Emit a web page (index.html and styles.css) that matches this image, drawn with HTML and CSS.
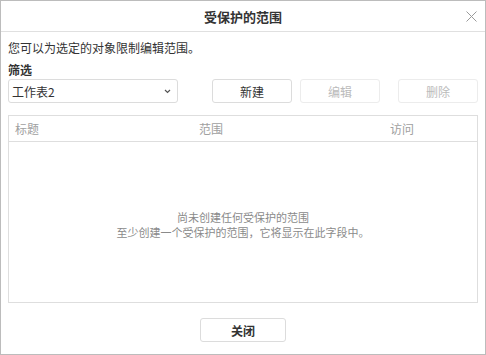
FILE: index.html
```html
<!DOCTYPE html>
<html lang="zh-CN">
<head>
  <meta charset="UTF-8">
  <title>受保护的范围</title>
  <link rel="stylesheet" href="styles.css">
</head>
<body>
  <div id="dialog">
    <!-- Header -->
    <div class="dlg-header">
      <span class="dlg-title">受保护的范围</span>
      <svg class="dlg-close" width="11" height="11" viewBox="0 0 11 11">
        <path d="M0.5 0.5 L10.5 10.5 M10.5 0.5 L0.5 10.5" stroke="#9a9a9a" stroke-width="1" fill="none"/>
      </svg>
    </div>

    <!-- Body -->
    <div class="dlg-body">
      <p class="desc">您可以为选定的对象限制编辑范围。</p>
      <div class="label">筛选</div>
      <div class="toolbar">
        <div class="select">
          <span>工作表2</span>
          <svg width="7" height="5" viewBox="0 0 7 5">
            <path d="M1 1 L3.5 3.5 L6 1" stroke="#555" stroke-width="1.2" fill="none"/>
          </svg>
        </div>
        <button class="btn btn-new">新建</button>
        <button class="btn btn-edit" disabled>编辑</button>
        <button class="btn btn-del" disabled>删除</button>
      </div>

      <div class="table">
        <div class="table-head">
          <span>标题</span>
          <span>范围</span>
          <span>访问</span>
        </div>
        <div class="table-empty">
          <p>尚未创建任何受保护的范围</p>
          <p>至少创建一个受保护的范围，它将显示在此字段中。</p>
        </div>
      </div>
    </div>

    <!-- Footer -->
    <div class="dlg-footer">
      <button class="btn btn-close">关闭</button>
    </div>
  </div>
</body>
</html>
```

FILE: styles.css
```css
html, body {
  margin: 0;
  height: 100%;
  background: #fff;
}
body {
  font-family: "Noto Sans CJK SC", "Noto Sans", sans-serif;
  font-size: 12px;
  color: #333;
}
#dialog {
  box-sizing: border-box;
  height: 355px;
  border: 1px solid #bcbcbc;
  display: flex;
  flex-direction: column;
}
.dlg-header {
  position: relative;
  height: 30px;
  border-bottom: 1px solid #e0e0e0;
  display: flex;
  align-items: center;
  justify-content: center;
}
.dlg-title {
  font-size: 13px;
  font-weight: bold;
  color: #333;
}
.dlg-close {
  position: absolute;
  right: 8px;
  top: 10px;
}
.dlg-body {
  flex: 1;
  display: flex;
  flex-direction: column;
  padding: 0 7px;
}
.desc {
  margin: 8px 0 0;
  line-height: 16px;
}
.label {
  margin-top: 6px;
  line-height: 16px;
  font-weight: bold;
}
.toolbar {
  margin-top: 1px;
  display: flex;
  align-items: center;
}
.select {
  box-sizing: border-box;
  width: 170px;
  height: 24px;
  border: 1px solid #dcdcdc;
  border-radius: 3px;
  display: flex;
  align-items: center;
  justify-content: space-between;
  padding: 0 6px 0 3px;
  font-size: 12px;
  color: #333;
}
.btn {
  box-sizing: border-box;
  width: 80px;
  height: 24px;
  background: #fff;
  border: 1px solid #dcdcdc;
  border-radius: 3px;
  font-family: inherit;
  font-size: 12px;
  color: #333;
  padding: 0;
}
.btn:disabled {
  color: #bbb;
  border-color: #ececec;
}
.btn-new {
  margin-left: 34px;
}
.btn-edit {
  margin-left: 8px;
}
.btn-del {
  margin-left: auto;
}
.table {
  flex: 1;
  margin-top: 12px;
  border: 1px solid #dedede;
  display: flex;
  flex-direction: column;
}
.table-head {
  height: 25px;
  border-bottom: 1px solid #dedede;
  display: grid;
  grid-template-columns: 184px 191px 1fr;
  align-items: center;
  padding-left: 6px;
  color: #a0a0a0;
}
.table-empty {
  flex: 1;
  display: flex;
  flex-direction: column;
  align-items: center;
  justify-content: center;
  padding-top: 6px;
  color: #8a8a8a;
  font-size: 11px;
}
.table-empty p {
  margin: 0;
  line-height: 15px;
}
.dlg-footer {
  display: flex;
  justify-content: center;
  padding: 15px 0 12px;
}
.btn-close {
  width: 86px;
  font-weight: bold;
}
```
